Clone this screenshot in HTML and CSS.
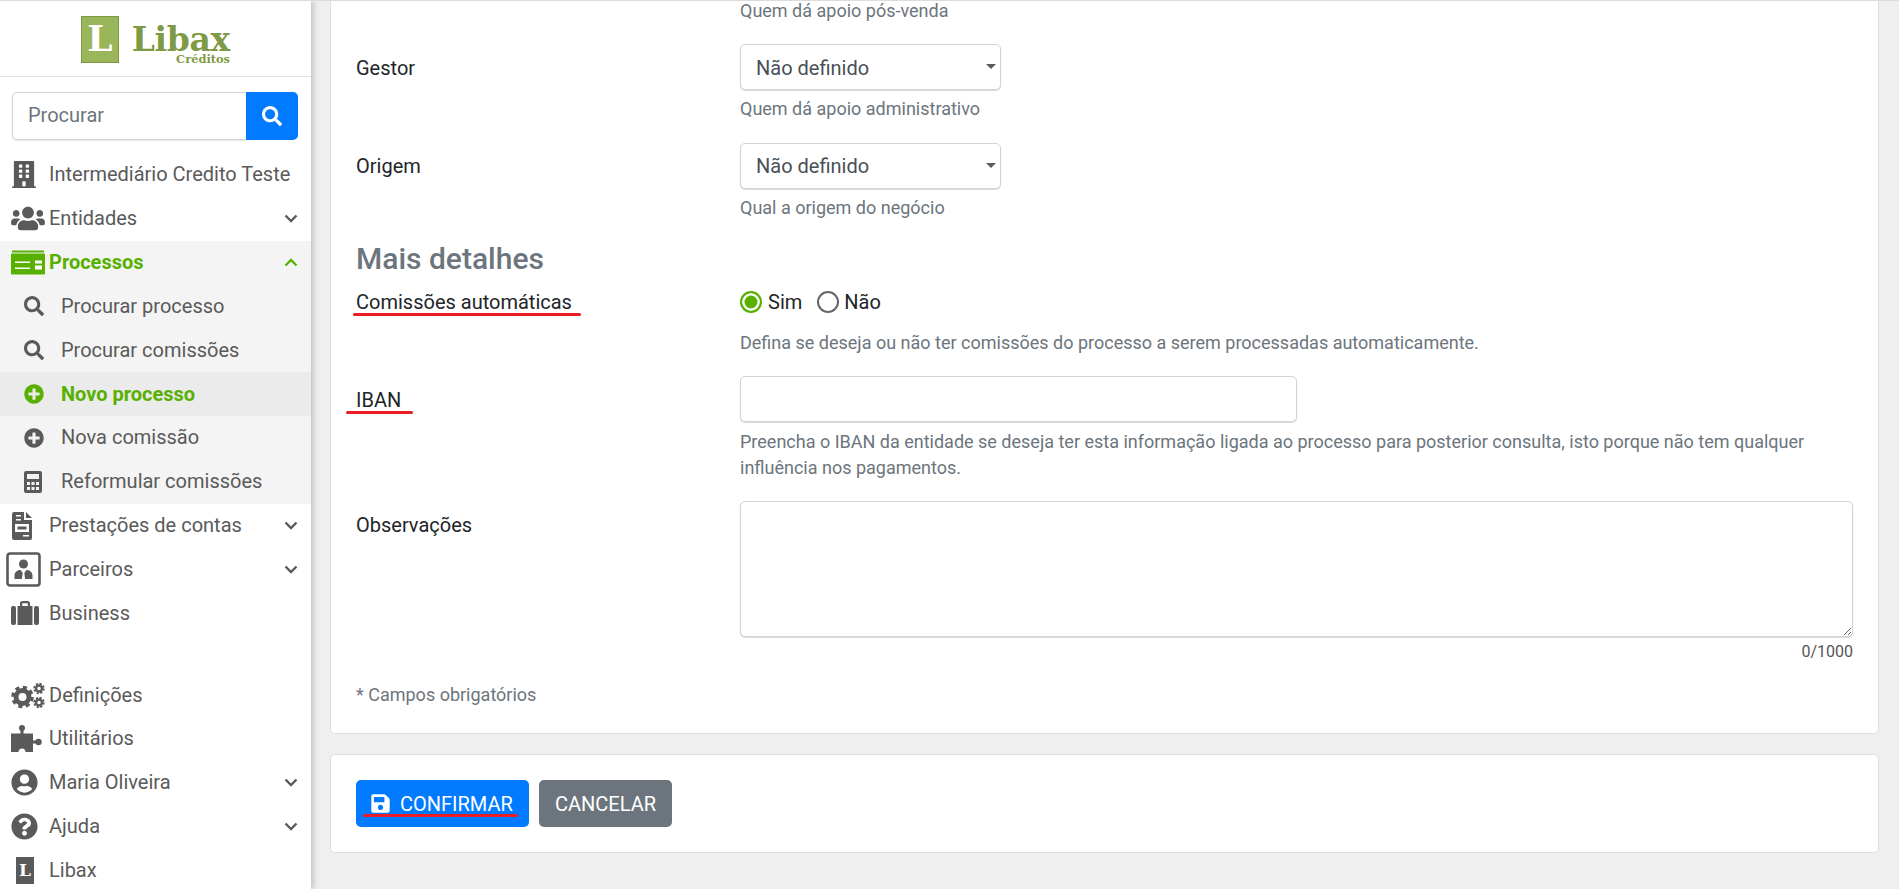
FILE: index.html
```html
<!DOCTYPE html>
<html lang="pt">
<head>
<meta charset="utf-8">
<title>Libax Créditos</title>
<link rel="stylesheet" href="styles.css">
</head>
<body>
<div class="app">
  <aside class="sidebar">
    <div class="brand">
      <div class="brand-box">L</div>
      <div class="brand-words"><span class="brand-name">Libax</span><span class="brand-sub">Créditos</span></div>
    </div>
    <div class="search">
      <input class="search-input" type="text" placeholder="Procurar">
      <button class="search-btn" type="button"><svg class="ico-search-btn" viewBox="0 0 512 512"><path d="M505 442.7L405.3 343c-4.5-4.5-10.6-7-17-7H372c27.6-35.3 44-79.7 44-128C416 93.1 322.9 0 208 0S0 93.1 0 208s93.1 208 208 208c48.3 0 92.7-16.4 128-44v16.3c0 6.4 2.5 12.5 7 17l99.7 99.7c9.4 9.4 24.6 9.4 33.9 0l28.3-28.3c9.4-9.4 9.4-24.6.1-34zM208 336c-70.7 0-128-57.2-128-128 0-70.7 57.2-128 128-128 70.7 0 128 57.2 128 128 0 70.7-57.2 128-128 128z"/></svg></button>
    </div>
    <nav class="nav">
      <div class="row"><span class="slot"><svg class="i-building" viewBox="0 0 448 512"><path d="M436 480h-20V24c0-13.255-10.745-24-24-24H56C42.745 0 32 10.745 32 24v456H12c-6.627 0-12 5.373-12 12v20h448v-20c0-6.627-5.373-12-12-12zM128 76c0-6.627 5.373-12 12-12h40c6.627 0 12 5.373 12 12v40c0 6.627-5.373 12-12 12h-40c-6.627 0-12-5.373-12-12V76zm0 96c0-6.627 5.373-12 12-12h40c6.627 0 12 5.373 12 12v40c0 6.627-5.373 12-12 12h-40c-6.627 0-12-5.373-12-12v-40zm52 148h-40c-6.627 0-12-5.373-12-12v-40c0-6.627 5.373-12 12-12h40c6.627 0 12 5.373 12 12v40c0 6.627-5.373 12-12 12zm76 160h-64v-84c0-6.627 5.373-12 12-12h40c6.627 0 12 5.373 12 12v84zm64-172c0 6.627-5.373 12-12 12h-40c-6.627 0-12-5.373-12-12v-40c0-6.627 5.373-12 12-12h40c6.627 0 12 5.373 12 12v40zm0-96c0 6.627-5.373 12-12 12h-40c-6.627 0-12-5.373-12-12v-40c0-6.627 5.373-12 12-12h40c6.627 0 12 5.373 12 12v40zm0-96c0 6.627-5.373 12-12 12h-40c-6.627 0-12-5.373-12-12V76c0-6.627 5.373-12 12-12h40c6.627 0 12 5.373 12 12v40z"/></svg></span><span class="label">Intermediário Credito Teste</span></div>
      <div class="row"><span class="slot"><svg class="i-wide" viewBox="0 0 640 512"><path d="M96 224c35.3 0 64-28.7 64-64s-28.7-64-64-64-64 28.7-64 64 28.7 64 64 64zm448 0c35.3 0 64-28.7 64-64s-28.7-64-64-64-64 28.7-64 64 28.7 64 64 64zm32 32h-64c-17.6 0-33.5 7.1-45.1 18.6 40.3 22.1 68.9 62 75.1 109.4h66c17.7 0 32-14.3 32-32v-32c0-35.3-28.7-64-64-64zm-256 0c61.9 0 112-50.1 112-112S381.9 32 320 32 208 82.1 208 144s50.1 112 112 112zm76.8 32h-8.3c-20.8 10-43.9 16-68.5 16s-47.6-6-68.5-16h-8.3C179.6 288 128 339.6 128 403.2V432c0 26.5 21.5 48 48 48h288c26.5 0 48-21.5 48-48v-28.8c0-63.6-51.6-115.2-115.2-115.2zm-223.7-13.4C161.5 263.1 145.6 256 128 256H64c-35.3 0-64 28.7-64 64v32c0 17.7 14.3 32 32 32h65.9c6.3-47.4 34.9-87.3 75.2-109.4z"/></svg></span><span class="label">Entidades</span><svg class="chev" viewBox="0 0 14 9"><path d="M1.5 1.5L7 7l5.500-5.500"/></svg></div>
      <div class="group">
        <div class="row active"><span class="slot"><svg class="i-wide" viewBox="0 0 34 24"><path d="M1 0h32v2H1zM1 3h32a1 1 0 0 1 1 1v19a1 1 0 0 1-1 1H1a1 1 0 0 1-1-1V4a1 1 0 0 1 1-1z"/><path class="cut" d="M4 11h15v1.500H4zM4 17h15v1.500H4zM24 10h7v3h-7zM24 15h7v4h-7z"/></svg></span><span class="label">Processos</span><svg class="chev" viewBox="0 0 14 9"><path d="M1.500 7.500L7 2l5.500 5.500"/></svg></div>
        <div class="row sub"><span class="slot"><svg class="i-sub" viewBox="0 0 512 512"><path d="M505 442.7L405.3 343c-4.5-4.5-10.6-7-17-7H372c27.6-35.3 44-79.7 44-128C416 93.1 322.9 0 208 0S0 93.1 0 208s93.1 208 208 208c48.3 0 92.7-16.4 128-44v16.3c0 6.4 2.5 12.5 7 17l99.7 99.7c9.4 9.4 24.6 9.4 33.9 0l28.3-28.3c9.4-9.4 9.4-24.6.1-34zM208 336c-70.7 0-128-57.2-128-128 0-70.7 57.2-128 128-128 70.7 0 128 57.2 128 128 0 70.7-57.2 128-128 128z"/></svg></span><span class="label">Procurar processo</span></div>
        <div class="row sub"><span class="slot"><svg class="i-sub" viewBox="0 0 512 512"><path d="M505 442.7L405.3 343c-4.5-4.5-10.6-7-17-7H372c27.6-35.3 44-79.7 44-128C416 93.1 322.9 0 208 0S0 93.1 0 208s93.1 208 208 208c48.3 0 92.7-16.4 128-44v16.3c0 6.4 2.5 12.5 7 17l99.7 99.7c9.4 9.4 24.6 9.4 33.9 0l28.3-28.3c9.4-9.4 9.4-24.6.1-34zM208 336c-70.7 0-128-57.2-128-128 0-70.7 57.2-128 128-128 70.7 0 128 57.2 128 128 0 70.7-57.2 128-128 128z"/></svg></span><span class="label">Procurar comissões</span></div>
        <div class="row sub current active"><span class="slot"><svg class="i-sub" viewBox="0 0 512 512"><path d="M256 8C119 8 8 119 8 256s111 248 248 248 248-111 248-248S393 8 256 8zm144 276c0 6.600-5.400 12-12 12h-92v92c0 6.600-5.400 12-12 12h-56c-6.600 0-12-5.400-12-12v-92h-92c-6.600 0-12-5.400-12-12v-56c0-6.600 5.400-12 12-12h92v-92c0-6.600 5.400-12 12-12h56c6.600 0 12 5.400 12 12v92h92c6.600 0 12 5.400 12 12v56z"/></svg></span><span class="label">Novo processo</span></div>
        <div class="row sub"><span class="slot"><svg class="i-sub" viewBox="0 0 512 512"><path d="M256 8C119 8 8 119 8 256s111 248 248 248 248-111 248-248S393 8 256 8zm144 276c0 6.600-5.400 12-12 12h-92v92c0 6.600-5.400 12-12 12h-56c-6.600 0-12-5.400-12-12v-92h-92c-6.600 0-12-5.400-12-12v-56c0-6.600 5.400-12 12-12h92v-92c0-6.600 5.400-12 12-12h56c6.600 0 12 5.400 12 12v92h92c6.600 0 12 5.400 12 12v56z"/></svg></span><span class="label">Nova comissão</span></div>
        <div class="row sub"><span class="slot"><svg class="i-calc" viewBox="0 0 18 22"><path fill-rule="evenodd" d="M2 0h14a2 2 0 0 1 2 2v18a2 2 0 0 1-2 2H2a2 2 0 0 1-2-2V2a2 2 0 0 1 2-2zM3 3v5h12V3zM3 11v3h3v-3zM7.500 11v3h3v-3zM12 11v3h3v-3zM3 16v3h3v-3zM7.500 16v3h3v-3zM12 16v3h3v-3z"/></svg></span><span class="label">Reformular comissões</span></div>
      </div>
      <div class="row"><span class="slot"><svg class="i-file" viewBox="0 0 20 28"><path fill-rule="evenodd" d="M2 0h10v8h8v18a2 2 0 0 1-2 2H2a2 2 0 0 1-2-2V2a2 2 0 0 1 2-2zM14 0l6 6h-6zM4 3v1.500h5V3zM4 7v1.500h5V7zM3 12v8h14v-8zM5.500 14.500h9v3h-9zM11 23v1.500h6V23z"/></svg></span><span class="label">Prestações de contas</span><svg class="chev" viewBox="0 0 14 9"><path d="M1.500 1.500L7 7l5.500-5.500"/></svg></div>
      <div class="row"><span class="slot"><svg class="i-partner" viewBox="0 0 35 35"><rect x="1.500" y="1.500" width="32" height="32" rx="2.500" class="frame"/><circle cx="17.500" cy="12" r="4.500"/><path d="M8.500 27v-3.500c0-3.500 3-5.500 6-5.500l3 4 3-4c3 0 6 2 6 5.500V27z"/><path class="cut" d="M16.700 21h1.600l.8 6h-3.200z"/></svg></span><span class="label">Parceiros</span><svg class="chev" viewBox="0 0 14 9"><path d="M1.500 1.500L7 7l5.500-5.500"/></svg></div>
      <div class="row"><span class="slot"><svg class="i-case" viewBox="0 0 28 24"><path fill-rule="evenodd" d="M6.500 5h15v19h-15zM9 5V2.500A2.500 2.500 0 0 1 11.500 0h5A2.500 2.500 0 0 1 19 2.500V5h-2.200V2.200h-5.600V5z"/><rect x="0" y="5" width="5" height="19" rx="2"/><rect x="23" y="5" width="5" height="19" rx="2"/></svg></span><span class="label">Business</span></div>
      <div class="nav-gap"></div>
      <div class="row"><span class="slot"><svg class="i-wide tall" viewBox="0 0 34 26"><g class="gear"><circle cx="11.500" cy="14.500" r="6.500" class="ring"/><circle cx="11.500" cy="14.500" r="9.800" class="teeth"/><circle cx="28" cy="6" r="3" class="ring small"/><circle cx="28" cy="6" r="4.800" class="teeth small"/><circle cx="28" cy="20" r="3" class="ring small"/><circle cx="28" cy="20" r="4.800" class="teeth small"/></g></svg></span><span class="label">Definições</span></div>
      <div class="row"><span class="slot"><svg class="i-puzzle" viewBox="0 0 31 27"><path d="M9.500 4h3v4.500h9.500v7h3.500v3H22V27h-7.500a3.500 3.500 0 0 0-7 0H0V8.500h9.500z"/><circle cx="11" cy="3" r="3"/><circle cx="27.500" cy="17" r="3.200"/></svg></span><span class="label">Utilitários</span></div>
      <div class="row"><span class="slot"><svg class="i-circle" viewBox="0 0 496 512"><path d="M248 8C111 8 0 119 0 256s111 248 248 248 248-111 248-248S385 8 248 8zm0 96c48.600 0 88 39.400 88 88s-39.400 88-88 88-88-39.400-88-88 39.400-88 88-88zm0 344c-58.700 0-111.300-26.600-146.500-68.200 18.800-35.400 55.600-59.800 98.500-59.800 2.400 0 4.800.4 7.100 1.100 13 4.200 26.600 6.900 40.900 6.900 14.300 0 28-2.700 40.900-6.900 2.300-.7 4.700-1.100 7.100-1.100 42.900 0 79.700 24.400 98.500 59.800C359.300 421.400 306.700 448 248 448z"/></svg></span><span class="label">Maria Oliveira</span><svg class="chev" viewBox="0 0 14 9"><path d="M1.500 1.500L7 7l5.500-5.500"/></svg></div>
      <div class="row"><span class="slot"><svg class="i-circle" viewBox="0 0 512 512"><path d="M504 256c0 136.997-111.043 248-248 248S8 392.997 8 256C8 119.083 119.043 8 256 8s248 111.083 248 248zM262.655 90c-54.497 0-89.255 22.957-116.549 63.758-3.536 5.286-2.353 12.415 2.715 16.258l34.699 26.310c5.205 3.947 12.621 3.008 16.665-2.122 17.864-22.658 30.113-35.797 57.303-35.797 20.429 0 45.698 13.148 45.698 32.958 0 14.976-12.363 22.667-32.534 33.976C247.128 238.528 216 254.941 216 296v4c0 6.627 5.373 12 12 12h56c6.627 0 12-5.373 12-12v-1.333c0-28.462 83.186-29.647 83.186-106.667 0-58.002-60.165-102-116.531-102zM256 338c-25.365 0-46 20.635-46 46 0 25.364 20.635 46 46 46s46-20.636 46-46c0-25.365-20.635-46-46-46z"/></svg></span><span class="label">Ajuda</span><svg class="chev" viewBox="0 0 14 9"><path d="M1.500 1.500L7 7l5.500-5.500"/></svg></div>
      <div class="row"><span class="slot"><span class="mini-logo">L</span></span><span class="label">Libax</span></div>
    </nav>
  </aside>

  <main class="main">
    <section class="card form-card">
      <div class="field first">
        <div></div>
        <div class="help">Quem dá apoio pós-venda</div>
      </div>
      <div class="field">
        <label class="name">Gestor</label>
        <div>
          <div class="select-wrap"><select class="control low"><option>Não definido</option></select></div>
          <div class="help">Quem dá apoio administrativo</div>
        </div>
      </div>
      <div class="field">
        <label class="name tight">Origem</label>
        <div>
          <div class="select-wrap"><select class="control"><option>Não definido</option></select></div>
          <div class="help">Qual a origem do negócio</div>
        </div>
      </div>
      <h2 class="section-title">Mais detalhes</h2>
      <div class="field">
        <label class="name radio-name"><span class="marked">Comissões automáticas<span class="mark mark-com"></span></span></label>
        <div>
          <div class="radios">
            <span class="radio on"></span><span class="radio-text">Sim</span>
            <span class="radio"></span><span class="radio-text">Não</span>
          </div>
          <div class="help after-radio">Defina se deseja ou não ter comissões do processo a serem processadas automaticamente.</div>
        </div>
      </div>
      <div class="field">
        <label class="name"><span class="marked">IBAN<span class="mark mark-iban"></span></span></label>
        <div>
          <input class="control iban" type="text">
          <div class="help after-iban">Preencha o IBAN da entidade se deseja ter esta informação ligada ao processo para posterior consulta, isto porque não tem qualquer influência nos pagamentos.</div>
        </div>
      </div>
      <div class="field">
        <label class="name">Observações</label>
        <div>
          <textarea class="control notes"></textarea>
          <div class="count">0/1000</div>
        </div>
      </div>
      <div class="required">* Campos obrigatórios</div>
    </section>
    <section class="card actions">
      <button class="btn primary" type="button"><svg class="i-save" viewBox="0 0 448 512"><path d="M433.941 129.941l-83.882-83.882A48 48 0 0 0 316.118 32H48C21.490 32 0 53.490 0 80v352c0 26.510 21.490 48 48 48h352c26.510 0 48-21.490 48-48V163.882a48 48 0 0 0-14.059-33.941zM224 416c-35.346 0-64-28.654-64-64 0-35.346 28.654-64 64-64s64 28.654 64 64c0 35.346-28.654 64-64 64zm96-304.520V212c0 6.627-5.373 12-12 12H76c-6.627 0-12-5.373-12-12V108c0-6.627 5.373-12 12-12h228.520c3.183 0 6.235 1.264 8.485 3.515l3.480 3.480A11.996 11.996 0 0 1 320 111.480z"/></svg>CONFIRMAR<span class="mark mark-btn"></span></button>
      <button class="btn secondary" type="button">CANCELAR</button>
    </section>
  </main>
</div>
</body>
</html>
```
FILE: styles.css
```css
* { box-sizing: border-box; }
html, body { margin: 0; padding: 0; height: 100%; overflow: hidden; }
body { font-family: Roboto, "Liberation Sans", sans-serif; background: #efefef; color: #212529; }

.app {
  display: grid;
  grid-template-columns: 311px 1fr;
  height: 889px;
  overflow: hidden;
  border-top: 1px solid #dcdcdc;
}

/* Sidebar */
.sidebar {
  background: #fff;
  box-shadow: 2px 0 6px rgba(0, 0, 0, .22);
  height: 888px;
  overflow: hidden;
  position: relative;
  z-index: 1;
}
.brand {
  border-bottom: 1px solid #e3e3e3;
  display: flex;
  justify-content: center;
  gap: 13px;
  padding: 15px 0 0 0;
  height: 76px;
}
.brand-box {
  width: 38px;
  height: 47px;
  background: #9ab65a;
  border: 1px solid #7d9a42;
  color: #fff;
  font: 700 36px/43px "DejaVu Serif", serif;
  text-align: center;
}
.brand-words { display: flex; flex-direction: column; align-items: flex-end; width: 98px; color: #7f9a45; font-family: "DejaVu Serif", serif; font-weight: 700; }
.brand-name { font-size: 33px; line-height: 26px; margin-top: 11px; letter-spacing: -.3px; }
.brand-sub { font-size: 11.400px; line-height: 10px; margin-top: 1px; }

.search { display: flex; margin: 15px 13px 13px 12px; height: 48px; }
.search-input {
  flex: 1;
  min-width: 0;
  height: 48px;
  border: 1px solid #ced4da;
  border-right: 0;
  border-radius: 5px 0 0 5px;
  box-shadow: 0 1px 1px rgba(0,0,0,.1);
  padding: 0 15px 2px;
  font: 400 20px Roboto, sans-serif;
  color: #495057;
  outline: none;
}
.search-input::placeholder { color: #6c757d; opacity: 1; }
.search-btn {
  width: 52px;
  border: 0;
  background: #007bff;
  border-radius: 0 5px 5px 0;
  display: flex;
  align-items: center;
  justify-content: center;
  padding: 0;
}
.ico-search-btn { width: 20px; height: 20px; fill: #fff; }

.nav { display: flex; flex-direction: column; }
.group { background: #f4f4f4; }
.row {
  height: 43.830px;
  display: flex;
  align-items: center;
  padding: 0 13px 0 11px;
  color: #5a5a5a;
  fill: #5a5a5a;
  font-size: 20px;
  flex: none;
}
.row.sub { padding-left: 24px; }
.slot { width: 38px; flex: none; display: flex; align-items: center; }
.sub .slot { width: 37px; }
.label { flex: 1; white-space: nowrap; position: relative; top: -.5px; }
.active { color: #58b000; fill: #58b000; font-weight: 700; }
.active .chev { stroke: #58b000; }
.current { background: #ebebeb; }
.nav-gap { height: 38px; flex: none; }

.chev { width: 14px; height: 9px; fill: none; stroke: #5a5a5a; stroke-width: 2.400; flex: none; }
.cut { fill: #fff; }
.current .cut { fill: #ebebeb; }
.i-building { width: 24px; height: 27px; margin-left: 1px; }
.i-wide { width: 34px; height: 27px; }
.i-sub { width: 20px; height: 20px; }
.i-calc { width: 18px; height: 22px; }
.i-file { width: 20px; height: 28px; margin-left: 1px; }
.i-partner { width: 35px; height: 35px; margin-left: -5px; }
.frame { fill: none; stroke: #5a5a5a; stroke-width: 2.600; }
.i-case { width: 28px; height: 24px; }
.i-puzzle { width: 31px; height: 27px; }
.i-circle { width: 27px; height: 27px; }
.gear { fill: none; stroke: #5a5a5a; }
.ring { stroke-width: 5; }
.ring.small { stroke-width: 2.400; }
.teeth { stroke-width: 3; stroke-dasharray: 4.200 3.500; }
.teeth.small { stroke-width: 1.800; stroke-dasharray: 2.300 1.450; }
.mini-logo {
  width: 18px;
  height: 27px;
  margin-left: 5px;
  background: #5a5a5a;
  color: #fff;
  font: 700 17px/26px "DejaVu Serif", serif;
  text-align: center;
}

/* Main */
.main { display: flex; flex-direction: column; gap: 20px; padding: 0 20px 0 19px; overflow: hidden; height: 888px; }
.card { background: #fff; border: 1px solid #dfdfdf; border-radius: 5px; flex: none; }
.form-card { border-top: 0; border-top-left-radius: 0; border-top-right-radius: 0; padding: 0 25px 25px; }
.field { display: grid; grid-template-columns: 384px 1fr; }
.field.first { margin-top: -3px; margin-bottom: 20px; }
.name { font-size: 20px; line-height: 26px; padding-top: 11px; color: #212529; }
.name.tight { padding-top: 10px; }
.radio-name { padding-top: 0; line-height: 24px; }
.marked { position: relative; display: inline-block; }
.help { font-size: 18px; line-height: 26px; color: #6c757d; margin-top: 6px; margin-bottom: 21px; }
.first .help { margin-top: 0; margin-bottom: 0; }
.control {
  display: block;
  width: 100%;
  height: 46px;
  border: 1px solid #ced4da;
  border-radius: 5px;
  box-shadow: 0 1px 1px rgba(0,0,0,.15);
  background: #fff;
  padding: 0 15px;
  font: 400 20px Roboto, sans-serif;
  color: #495057;
  outline: none;
}
.control.low { padding-top: 2px; }
.select-wrap { position: relative; width: 261px; }
.select-wrap select { appearance: none; -webkit-appearance: none; }
.select-wrap::after {
  content: "";
  position: absolute;
  right: 5px;
  top: 20px;
  border: 5px solid transparent;
  border-top: 5.500px solid #5a5a5a;
  border-bottom: 0;
}
.section-title { margin: 0 0 14px; font-size: 30px; line-height: 34px; font-weight: 500; color: #6c757d; }
.radios { display: flex; align-items: center; height: 24px; font-size: 20px; color: #212529; }
.radio { width: 22px; height: 22px; border: 2px solid #666; border-radius: 50%; background: #fff; flex: none; }
.radio.on { border-color: #58b000; background: #58b000; box-shadow: inset 0 0 0 2.500px #fff; }
.radio-text { margin: 0 15px 0 6px; }
.radio-text:last-child { margin-left: 5px; }
.help.after-radio { margin-top: 16px; margin-bottom: 20px; }
.help.after-iban { margin-top: 7px; margin-bottom: 20px; }
.iban { width: 557px; }
.notes { height: 136px; padding: 8px 15px; resize: vertical; }
.count { text-align: right; font-size: 16px; line-height: 26px; color: #555; margin-top: 2px; }
.required { font-size: 18px; line-height: 26px; color: #6c757d; margin-top: 17px; }

.actions { display: flex; gap: 10px; padding: 25px 25px 24px; height: 99px; }
.btn {
  position: relative;
  height: 47px;
  border: 0;
  border-radius: 5px;
  color: #fff;
  font: 400 20px Roboto, sans-serif;
  padding: 0 15px;
  display: flex;
  align-items: center;
}
.primary { background: #007bff; width: 173px; }
.secondary { background: #6c757d; width: 133px; justify-content: center; }
.i-save { width: 19px; height: 21px; fill: #fff; margin-right: 10px; }

.mark { position: absolute; height: 3px; background: #ed1c24; border-radius: 2px; }
.mark-com { left: -3px; width: 228px; top: 23px; }
.mark-iban { left: -10px; width: 67px; top: 24px; }
.mark-btn { left: 7px; width: 155px; top: 34px; }
```
